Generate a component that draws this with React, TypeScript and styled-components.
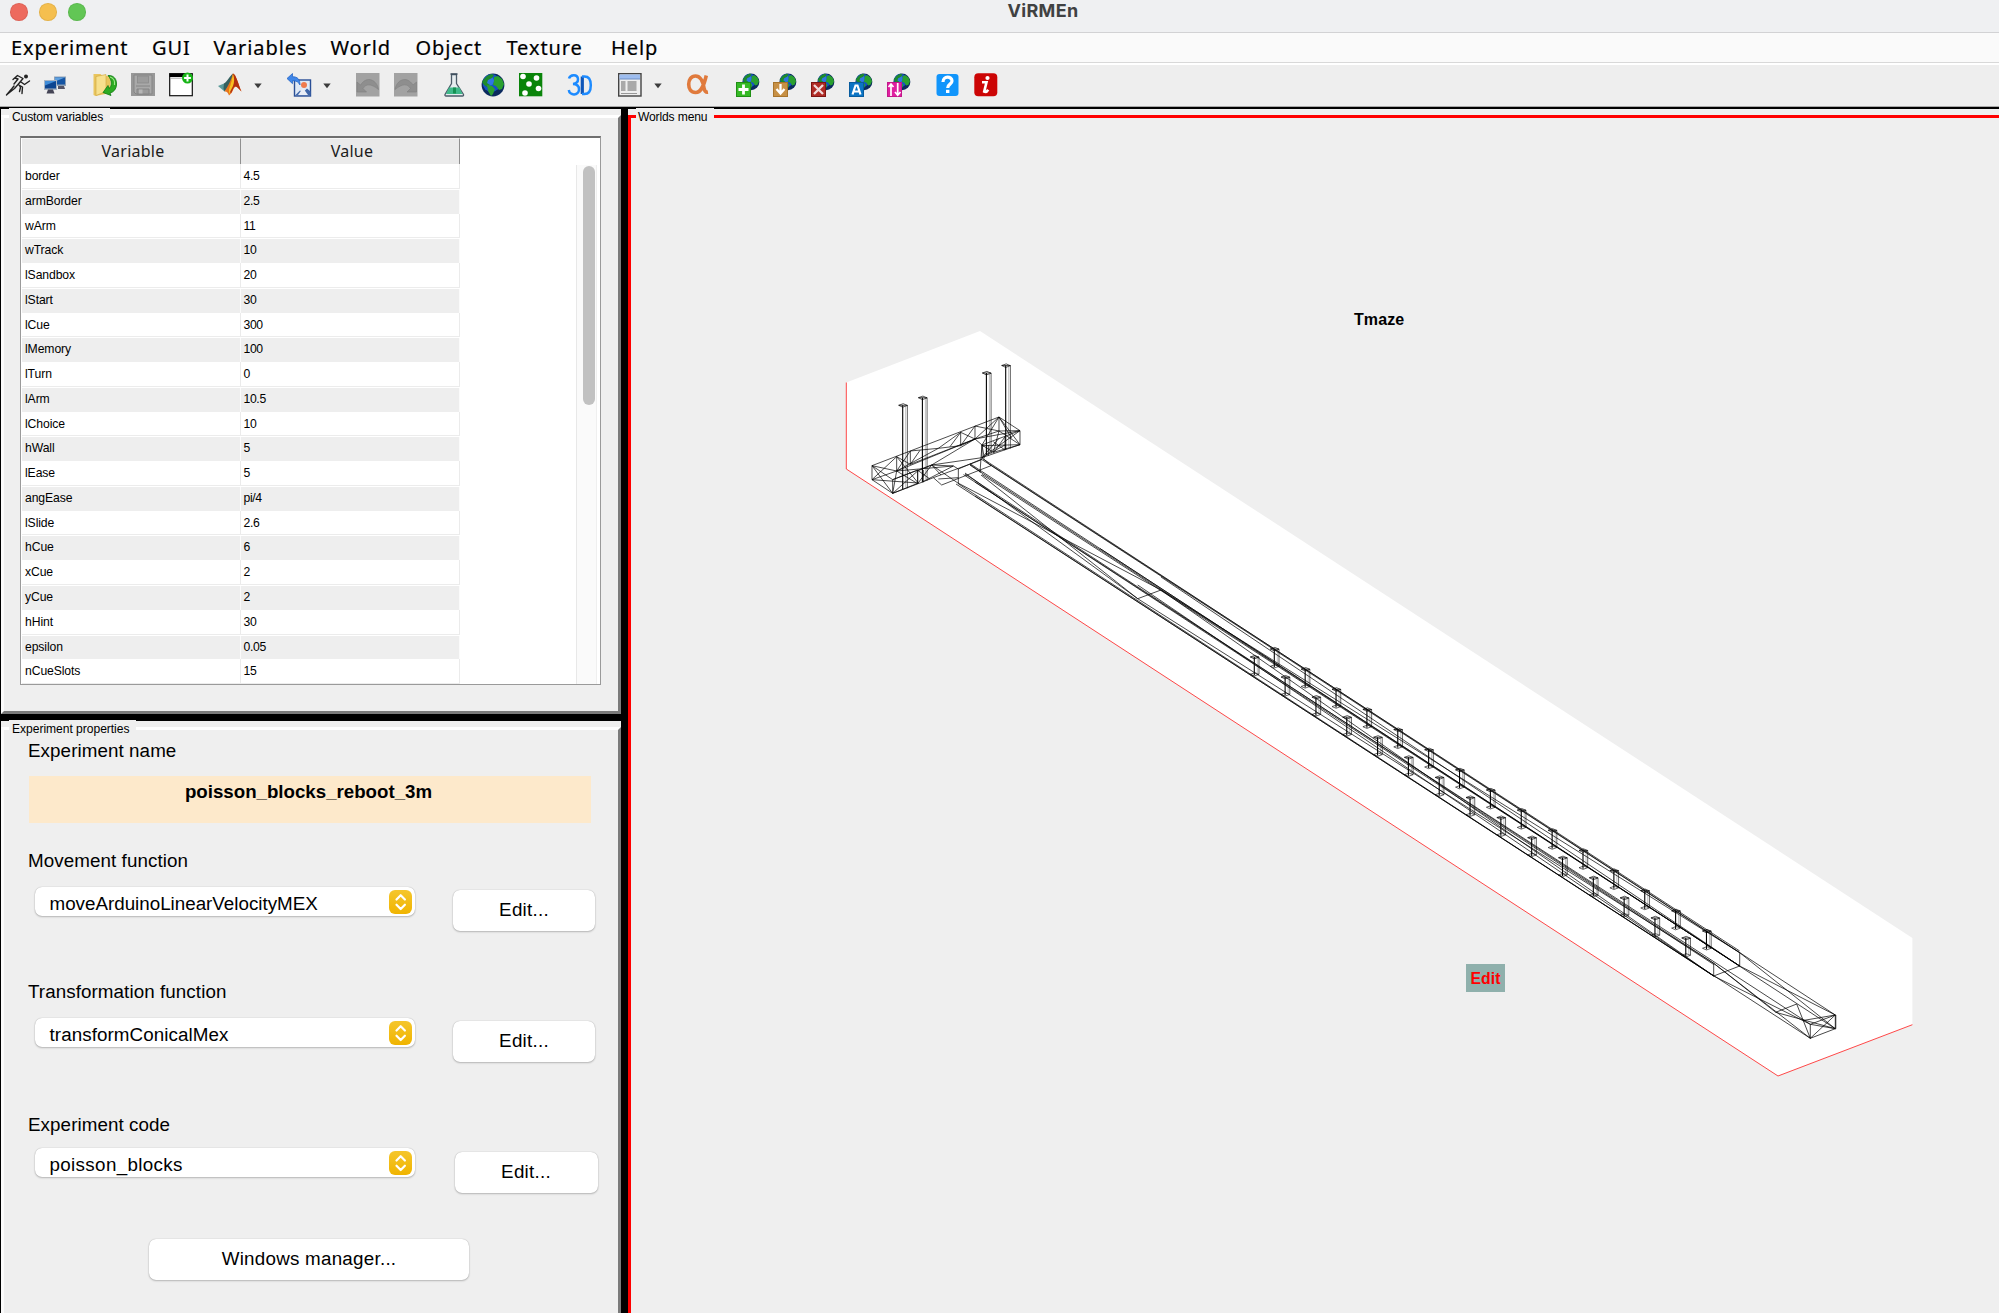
import React from 'react';
import styled, { createGlobalStyle } from 'styled-components';

const SANS = '"Liberation Sans", Arial, sans-serif';
const LUCIDA = '"Noto Sans", "Open Sans", sans-serif';

const GlobalStyle = createGlobalStyle`
  *, *::before, *::after { box-sizing: border-box; }
  body { margin: 0; background: #000; overflow: hidden; }
`;

const Window = styled.div`
  width: 1999px;
  height: 1313px;
  display: flex;
  flex-direction: column;
  overflow: hidden;
  background: #000;
  font-family: ${SANS};
  color: #000;
`;

/* ---------- title bar ---------- */
const TitleBar = styled.header`
  height: 33px;
  flex: none;
  display: grid;
  grid-template-columns: 1fr auto 1fr;
  align-items: start;
  background: #eff0f2;
  border-bottom: 1px solid #d2d2d4;
`;
const Lights = styled.div`
  display: flex;
  gap: 11.5px;
  padding: 3px 0 0 10px;
`;
const Light = styled.span<{ $color: string }>`
  width: 17.7px;
  height: 17.7px;
  border-radius: 50%;
  background: ${p => p.$color};
  box-shadow: inset 0 0 0 1px rgba(0, 0, 0, 0.07);
`;
const WindowTitle = styled.h1`
  margin: 0;
  padding-left: 87px;
  font: 700 18px/22px Inter, sans-serif;
  letter-spacing: 0.35px;
  color: #404142;
`;

/* ---------- menu bar ---------- */
const MenuBar = styled.nav`
  height: 32px;
  flex: none;
  display: flex;
  padding-left: 11px;
  background: linear-gradient(#fafafa 29px, #d8d8d8 29px 30px, #fff 30px);
`;
const MenuItem = styled.span<{ $w: number }>`
  width: ${p => p.$w}px;
  white-space: nowrap;
  font: 400 20px/30px ${LUCIDA};
  letter-spacing: 0.9px;
  -webkit-text-stroke: 0.2px #000;
`;

/* ---------- toolbar ---------- */
const Toolbar = styled.div`
  height: 41.5px;
  flex: none;
  display: flex;
  align-items: center;
  padding: 0 0 1px 5.5px;
  background: #eee;
  border-bottom: 1px solid #a8a8a8;
`;
const Tool = styled.span<{ $gap: number; $w?: number }>`
  width: ${p => p.$w ?? 24}px;
  height: 24px;
  margin-left: ${p => p.$gap}px;
  flex: none;
  svg { display: block; width: 100%; height: 100%; overflow: visible; }
`;

/* ---------- panels ---------- */
const Body = styled.main`
  flex: 1;
  min-height: 0;
  display: grid;
  grid-template-columns: 620px 1fr;
  column-gap: 7px;
  padding-left: 1px;
  border-top: 2px solid #000;
  box-shadow: inset 0 1px 0 #000;
  background: #000;
`;
const LeftColumn = styled.div`
  display: grid;
  grid-template-rows: 605px 1fr;
  row-gap: 7px;
`;
const Panel = styled.section`
  display: flex;
  flex-direction: column;
  padding-top: 6px;
  background: #efefef;
  min-height: 0;
`;
const Group = styled.div<{ $red?: boolean; $open?: boolean }>`
  flex: 1;
  min-height: 0;
  display: flex;
  flex-direction: column;
  border-style: solid;
  border-width: 3px;
  border-color: ${p => (p.$red ? '#f00' : '#fff #7b7b7b #7b7b7b #fbfbfb')};
  ${p => p.$open && 'border-bottom-width: 0;'}
  ${p => p.$red && 'border-right-width: 0;'}
`;
const Legend = styled.h2<{ $pad: number; $track?: number }>`
  margin: -10px 0 0 5px;
  padding: 0 7px 0 ${p => p.$pad}px;
  align-self: flex-start;
  height: 18px;
  background: #efefef;
  font: 400 12.1px/18px ${SANS};
  letter-spacing: ${p => p.$track ?? -0.15}px;
  white-space: nowrap;
`;

/* ---------- variables table ---------- */
const TableBox = styled.div`
  width: 581px;
  height: 549px;
  margin: 10px 0 0 16px;
  display: grid;
  grid-template-columns: 439px 1fr 20px;
  grid-template-rows: 100%;
  border: 1px solid #9a9a9a;
  border-top: 2px solid #6f6f6f;
  background: #fff;
`;
const Table = styled.div`
  display: flex;
  flex-direction: column;
  padding-left: 1px;
  min-height: 0;
`;
const HeadRow = styled.div`
  height: 26.5px;
  flex: none;
  display: grid;
  grid-template-columns: 219px 1fr;
`;
const HeadCell = styled.div`
  background: #eaeaea;
  padding-left: 4px;
  border-right: 1px solid #8f8f8f;
  border-bottom: 1px solid #8f8f8f;
  border-top: 1px solid #f6f6f6;
  text-align: center;
  font: 400 16px/25px ${LUCIDA};
  letter-spacing: 0.25px;
  color: #1c1c1c;
`;
const Rows = styled.div`
  flex: 1;
  min-height: 0;
  overflow: hidden;
  display: grid;
  grid-template-rows: repeat(21, 24.77px);
`;
const Row = styled.div<{ $alt: boolean }>`
  display: grid;
  grid-template-columns: 219px 1fr;
  align-items: stretch;
  min-height: 0;
  background: ${p => (p.$alt ? '#eee' : '#fff')};
  border-top: ${p => (p.$alt ? '1px solid #fff' : '0')};
  border-bottom: ${p => (p.$alt ? '0' : '1px solid #ececec')};
  --rule: ${p => (p.$alt ? '#fbfbfb' : '#ebebeb')};
`;
const Cell = styled.span<{ $numeric?: boolean; $alt: boolean }>`
  padding-left: ${p => (p.$numeric ? 2.5 : 3)}px;
  border-right: 1px solid var(--rule);
  font: 400 12.2px/${p => (p.$alt ? 23 : 24.5)}px ${SANS};
  letter-spacing: ${p => (p.$numeric ? -0.35 : -0.1)}px;
  overflow: hidden;
`;
const ScrollTrack = styled.div`
  grid-column: 3;
  margin: 27px 0 0 -4px;
  width: 21px;
  padding: 1px 0 0 5.5px;
  background: #fafafa;
  border-left: 1px solid #e8e8e8;
  border-right: 1px solid #efefef;
`;
const ScrollThumb = styled.div`
  width: 12px;
  height: 239px;
  border-radius: 6px;
  background: #c1c1c1;
`;

/* ---------- experiment form ---------- */
const Form = styled.div`
  padding-left: 24px;
  display: flex;
  flex-direction: column;
`;
const Label = styled.label<{ $mt: number }>`
  height: 22px;
  margin-top: ${p => p.$mt}px;
  font: 400 18.8px/22px ${SANS};
  letter-spacing: 0.08px;
`;
const NameBox = styled.div`
  width: 562px;
  height: 46.5px;
  margin: 14.5px 0 0 1px;
  padding-top: 4px;
  padding-right: 3px;
  background: #fde9cb;
  text-align: center;
  font: 700 18.7px/23px ${SANS};
`;
const Field = styled.div<{ $mt: number }>`
  display: flex;
  align-items: flex-start;
  margin: ${p => p.$mt}px 0 0 7px;
`;
const Select = styled.div<{ $track: number }>`
  width: 380px;
  height: 29px;
  display: flex;
  justify-content: space-between;
  align-items: flex-start;
  padding: 3px 3px 0 14.5px;
  border-radius: 7px;
  background: #fff;
  box-shadow: 0 0 1px rgba(0, 0, 0, 0.3), 0 1px 2px rgba(0, 0, 0, 0.22);
  font: 400 18.8px/28px ${SANS};
  letter-spacing: ${p => p.$track}px;
`;
const Stepper = styled.span`
  width: 23px;
  height: 24px;
  border-radius: 6px;
  background: linear-gradient(#f5c62c, #f0b400);
  svg { display: block; width: 23px; height: 24px; }
`;
const Button = styled.button<{ $w: number; $ml: number; $mt: number }>`
  width: ${p => p.$w}px;
  height: 41px;
  margin: ${p => p.$mt}px 0 0 ${p => p.$ml}px;
  padding: 0 0 1px;
  border: 0;
  border-radius: 7px;
  background: #fff;
  box-shadow: 0 0 1px rgba(0, 0, 0, 0.3), 0 1px 2px rgba(0, 0, 0, 0.22);
  font: 400 18.8px/22px ${SANS};
  letter-spacing: 0.25px;
  color: #000;
`;

/* ---------- world canvas ---------- */
const Canvas = styled.div`
  position: relative;
  flex: 1;
  min-height: 0;
`;
const Scene = styled.svg`
  position: absolute;
  left: 199px;
  top: 194px;
  display: block;
`;
const WorldName = styled.span`
  position: absolute;
  left: 723px;
  top: 184px;
  font: 700 16px/20px ${SANS};
  letter-spacing: 0.1px;
`;
const EditTag = styled.span`
  position: absolute;
  left: 835px;
  top: 838px;
  width: 39px;
  height: 28px;
  background: #8fb0ac;
  color: #f00;
  text-align: center;
  font: 700 15.8px/30px ${SANS};
`;

const variables: [string, string][] = [
  ['border', '4.5'], ['armBorder', '2.5'], ['wArm', '11'], ['wTrack', '10'],
  ['lSandbox', '20'], ['lStart', '30'], ['lCue', '300'], ['lMemory', '100'],
  ['lTurn', '0'], ['lArm', '10.5'], ['lChoice', '10'], ['hWall', '5'],
  ['lEase', '5'], ['angEase', 'pi/4'], ['lSlide', '2.6'], ['hCue', '6'],
  ['xCue', '2'], ['yCue', '2'], ['hHint', '30'], ['epsilon', '0.05'],
  ['nCueSlots', '15'],
];

const menus: [string, number][] = [
  ['Experiment', 141], ['GUI', 61.5], ['Variables', 117], ['World', 85],
  ['Object', 91], ['Texture', 104.5], ['Help', 60],
];

/* ---------- icons ---------- */
const Svg = ({ children, box = '0 0 24 24' }: { children: React.ReactNode; box?: string }) => (
  <svg viewBox={box}>{children}</svg>
);

const GlobeArt = () => (
  <>
    <circle cx="12" cy="12" r="11.4" fill="#0b2a5e" />
    <circle cx="10.5" cy="10" r="9" fill="#1550c8" />
    <circle cx="8.5" cy="8" r="4.5" fill="#3b86ee" opacity=".7" />
    <path d="M3 6 6 3l4-2 3 1-2 3-4 2-1 3 3 2-3 2-3-2-2-3z" fill="#1d8a2c" />
    <path d="M13 4l4-1 4 3 2 5-2 5-3 1-3-4-3-1 1-4z" fill="#2aa02f" />
    <path d="M6 12l5 1 3 3-2 5-2 2-3-5z" fill="#2b9e33" />
    <path d="M20 5a11.4 11.4 0 0 1-13 17.300a11.400 11.400 0 0 0 13-17.300z" fill="#02101f" opacity=".6" />
  </>
);

const WorldBadge = ({ fill, stroke, children }: { fill: string; stroke: string; children: React.ReactNode }) => (
  <Svg>
    <g transform="translate(6 0) scale(.74)"><GlobeArt /></g>
    <rect x=".5" y="9.500" width="14" height="14" fill={fill} stroke={stroke} />
    {children}
  </Svg>
);

const Caret = ({ gap }: { gap: number }) => (
  <Tool $gap={gap} $w={8}>
    <Svg box="0 0 8 24"><path d="M.3 10.500h7.400L4 15.200z" fill="#3c3c3c" /></Svg>
  </Tool>
);

const Tools = () => (
  <Toolbar>
    <Tool $gap={0}>
      <Svg>
        <g fill="none" stroke="#222" strokeWidth="1.400" strokeLinecap="round" strokeLinejoin="round">
          <path d="M7 6.500 11.500 2.500 17 5.500 12 11.500 16.500 14 16 20.500M15 9l3.500 2.500L23.500 8M12 11.500 8.500 15.500 1 21.500M9 5l3 1-4 5M13.500 12.500l1 2-1 4M8 13l-2 2.500L.5 22" />
        </g>
        <circle cx="20" cy="3.500" r="2" fill="#222" />
      </Svg>
    </Tool>
    <Tool $gap={13.500}>
      <Svg>
        <rect x="11" y="3.500" width="12" height="9.500" fill="#8fa0b4" />
        <rect x="12" y="4.500" width="10" height="7" fill="#1555a4" />
        <path d="M12 4.500h10l-10 4z" fill="#5ea0e0" />
        <path d="M15 13h6l1 3h-7z" fill="#556" />
        <rect x="1" y="7" width="13" height="10" fill="#a7b4c4" />
        <rect x="2" y="8" width="11" height="7.500" fill="#0d4590" />
        <path d="M2 8h11L2 12.500z" fill="#3f8cd8" />
        <path d="M5 16.500h5l1.500 4H3.500z" fill="#445" />
      </Svg>
    </Tool>
    <Tool $gap={25.500}>
      <Svg>
        <path d="M.5 1h7l2 2h8v17l-15 3-2-1z" fill="#e9c55e" />
        <path d="M3 3.500l10-2v17L3 22.500z" fill="#f7e08d" stroke="#cfa53c" strokeWidth=".6" />
        <path d="M15 2.500c6-.5 9 4 8.500 9.500-.4 4-2.500 7-6.500 8l1 2.500-8-3 5-7 1 3c3-2 3.500-8-1-13z" fill="#2cab22" stroke="#0e7a12" strokeWidth=".8" />
        <path d="M17 4c4 1 5 5 4.500 8" stroke="#9fe68c" strokeWidth="1.200" fill="none" />
      </Svg>
    </Tool>
    <Tool $gap={14}>
      <Svg>
        <rect width="24" height="23" fill="#989898" />
        <path d="M3 2h18v19H5l-2-2z" fill="#a9a9a9" stroke="#858585" />
        <rect x="6.500" y="3" width="11" height="7" fill="#9c9c9c" stroke="#888" strokeWidth=".7" />
        <path d="M5 13h14M6 16h12v5H6z" fill="#9a9a9a" stroke="#848484" />
        <rect x="8" y="16.500" width="3.500" height="4" fill="#b6b6b6" />
      </Svg>
    </Tool>
    <Tool $gap={14}>
      <Svg>
        <rect x=".7" y=".7" width="22.600" height="22" fill="#fff" stroke="#111" strokeWidth="1.200" />
        <rect x=".5" y=".5" width="16" height="3.500" fill="#000" />
        <path d="M1 5.200h12" stroke="#aaa" />
        <circle cx="18.500" cy="5" r="5.500" fill="#17b417" />
        <path d="M18.500 1.600v6.800M15.100 5h6.800" stroke="#fff" strokeWidth="2" />
      </Svg>
    </Tool>
    <Tool $gap={25.500}>
      <Svg>
        <path d="M0 13 6 10.500 10 12l-3.500 6.500z" fill="#5c9b9a" />
        <path d="M6 10.500C9 9 11 4 15 .5l-1 9-7.500 9-1-3z" fill="#34605f" />
        <path d="M15 .5c-2 7-5 13-8.500 18 2-.5 3.500 1 4.500 4 4-3 4-7 6-8.500 2.500-1 3 1.500 6.500 4.500C20.500 12 18 1 15 .5z" fill="#e8731c" />
        <path d="M15 .5c-.5 6-2 12-4 16l2 4c2-4 2-6 4-7 2 0 3 1.500 6.500 5C20.500 12 18 1 15 .5z" fill="#b23012" />
        <path d="M15 1c1.500 4 1.500 8 0 12l-4 8 0-5c2-5 3-10 4-15z" fill="#f9c021" />
      </Svg>
    </Tool>
    <Caret gap={12} />
    <Tool $gap={25}>
      <Svg>
        <rect x="7.500" y="7" width="16" height="16" fill="#dfe9f6" stroke="#2a4f96" strokeWidth="1.400" />
        <path d="M8 22.500l5-5 3 2 4-4 3.500 3v4z" fill="#3f66a9" />
        <path d="M11 22l5-7 5 7z" fill="#e9edf6" />
        <circle cx="17" cy="12" r="3" fill="#ef7b4e" />
        <path d="M0 5.500 5.500.5v3.200c5 0 7.500 2.500 7.500 8.300-1.500-3-3.500-4.300-7.500-4.300v3z" fill="#3f86e8" stroke="#1b5bc0" strokeWidth=".7" />
      </Svg>
    </Tool>
    <Caret gap={12} />
    <Tool $gap={24.500}>
      <Svg>
        <rect width="23.500" height="23.500" fill="#a2a2a2" />
        <path d="M1 9v10h9.500l-3.500-3.500c3-5 8-5 15.500 1C21 7 11 2 4.500 12z" fill="#8e8e8e" stroke="#7f7f7f" strokeWidth=".6" />
      </Svg>
    </Tool>
    <Tool $gap={14}>
      <Svg>
        <rect width="23.500" height="23.500" fill="#a2a2a2" />
        <path d="M22.500 9v10H13l3.500-3.500c-3-5-8-5-15.500 1C2.500 7 12.500 2 19 12z" fill="#8e8e8e" stroke="#7f7f7f" strokeWidth=".6" />
      </Svg>
    </Tool>
    <Tool $gap={24.500}>
      <Svg>
        <path d="M9.500 1.500v9L3 21.500c-.3 1 .2 1.500 1 1.500h16.500c.8 0 1.300-.5 1-1.500L14.500 10.500v-9z" fill="#e6ecef" stroke="#4b5b68" strokeWidth="1.300" />
        <path d="M7 14.500h10.500l3 6.500H4z" fill="#3fb98a" />
        <path d="M11 14.500h3v6h-3z" fill="#159152" />
        <path d="M8.500 1h7" stroke="#3c4c5c" strokeWidth="1.500" />
      </Svg>
    </Tool>
    <Tool $gap={14.500}><Svg><GlobeArt /></Svg></Tool>
    <Tool $gap={14}>
      <Svg>
        <rect width="23.300" height="23.300" fill="#0a840a" />
        {[[4, 3.500], [17.500, 5], [10, 11], [19.500, 15.500], [6, 20]].map(([x, y]) => (
          <circle key={x} cx={x} cy={y} r="2.800" fill="#fff" />
        ))}
      </Svg>
    </Tool>
    <Tool $gap={25}>
      <Svg>
        <g fill="none" strokeWidth="2.500" stroke="#1d8bff">
          <path d="M1 5.500C2 1.500 9.500.5 10 6c.2 3-2 4.800-5 5 4 .2 6 2 6 5.300C11 23 1.500 23 .8 17" />
          <path d="M14.300 3.500v17.500" stroke="#0f56b8" strokeWidth="3.200" />
          <path d="M14 3.500h2.500c4 0 6.300 3.200 6.300 8.700s-2.300 8.800-6.300 8.800H14" />
        </g>
      </Svg>
    </Tool>
    <Tool $gap={26}>
      <Svg>
        <rect x=".7" y=".7" width="22.300" height="22.300" fill="#efefef" stroke="#444" strokeWidth="1.400" />
        <rect x="1.500" y="1.500" width="20.500" height="4.500" fill="#9dbdf0" />
        <path d="M1.500 6h20.500" stroke="#6f8fc5" />
        <rect x="3" y="8" width="4.500" height="10" fill="#a9a9a9" />
        <rect x="9.500" y="8" width="9" height="10" fill="#a9a9a9" />
        <path d="M3 20.500h16" stroke="#999" />
      </Svg>
    </Tool>
    <Caret gap={12} />
    <Tool $gap={24.500}>
      <Svg>
        <path d="M20.300 2.500C18 12 15.500 19.500 9.500 19.500c-4.500 0-6.800-3.500-6.800-8.200S5.200 3 9.500 3c5.500 0 7.500 6 8.500 12 .5 3 1.500 4.500 4 4.200" fill="none" stroke="#e07a3c" strokeWidth="3.600" />
      </Svg>
    </Tool>
    <Tool $gap={25.500}>
      <WorldBadge fill="#35b925" stroke="#1f8f14"><path d="M7.500 11.500v10M2.500 16.500h10" stroke="#fff" strokeWidth="2.800" /></WorldBadge>
    </Tool>
    <Tool $gap={13.800}>
      <WorldBadge fill="#c79045" stroke="#a8742c"><path d="M7.500 11v9M3.500 16l4 4.500 4-4.500" stroke="#fff" strokeWidth="2.300" fill="none" /></WorldBadge>
    </Tool>
    <Tool $gap={13.800}>
      <WorldBadge fill="#b02c26" stroke="#7d1512"><path d="M3 12l9 9M12 12l-9 9" stroke="#f1dcdc" strokeWidth="2.300" /></WorldBadge>
    </Tool>
    <Tool $gap={13.800}>
      <WorldBadge fill="#0b74c4" stroke="#085c9e"><path d="M3.500 21.500 6.500 12.500h2l3 9M5 18.500h5" stroke="#fff" strokeWidth="2.200" fill="none" /></WorldBadge>
    </Tool>
    <Tool $gap={13.800}>
      <WorldBadge fill="#e01fa0" stroke="#c2188a"><path d="M4 23V11.500M1.500 14 4 11l2.500 3M10.700 10v11.500M8 19l2.700 3.200 2.800-3.200" stroke="#fff" strokeWidth="1.700" fill="none" /></WorldBadge>
    </Tool>
    <Tool $gap={25.500}>
      <Svg>
        <rect x=".5" y="1" width="22" height="22" rx="3" fill="#1195fb" />
        <path d="M7 9c0-6.500 9-6 9-1 0 3.300-4.300 3-4.300 7" fill="none" stroke="#fff" strokeWidth="3.200" />
        <rect x="10" y="16.800" width="3.400" height="3.200" fill="#fff" />
      </Svg>
    </Tool>
    <Tool $gap={14}>
      <Svg>
        <rect x=".3" y=".3" width="23" height="23" rx="4" fill="#cc0505" />
        <circle cx="13.500" cy="5" r="2.100" fill="#fff" />
        <path d="M8 9.300h4.500l-2.300 9.400c1.500.8 3-.4 4-2" fill="none" stroke="#fff" strokeWidth="2.600" />
      </Svg>
    </Tool>
  </Toolbar>
);

/* ---------- maze wireframe ---------- */
type Seg = [number, number, number, number];
const toPath = (segs: Seg[]) => segs.map(([a, b, c, d]) => `M${a} ${b}L${c} ${d}`).join('');

/* Crossbar of the T, on a grid three times finer than the screen. */
const armSegs: Seg[] = [
  [36, 212, 417, 66], [417, 66, 480, 107], [480, 107, 480, 149], [480, 149, 366, 188],
  [36, 212, 36, 254], [36, 254, 98, 295], [98, 295, 185, 262], [36, 212, 98, 295],
  [36, 212, 98, 254], [98, 254, 98, 295], [36, 254, 110, 185], [36, 212, 110, 228],
  [36, 254, 110, 228], [110, 185, 110, 228], [151, 168, 151, 208], [302, 112, 302, 152],
  [345, 93, 345, 132], [417, 66, 417, 108], [98, 254, 173, 225], [98, 295, 110, 228],
  [110, 185, 173, 262], [36, 254, 173, 264], [98, 295, 173, 228], [110, 228, 173, 266],
  [110, 228, 151, 168], [110, 185, 151, 208], [110, 228, 235, 160], [151, 208, 345, 132],
  [151, 168, 235, 160], [235, 160, 302, 112], [235, 160, 302, 152], [302, 152, 345, 132],
  [302, 112, 345, 132], [302, 152, 345, 93], [302, 112, 270, 155], [180, 166, 151, 208],
  [110, 228, 280, 213], [110, 228, 345, 132], [98, 254, 215, 210], [215, 210, 345, 132],
  [215, 210, 366, 188], [173, 226, 173, 266], [173, 228, 215, 210], [173, 266, 215, 210],
  [185, 262, 220, 248], [173, 226, 210, 252], [190, 225, 190, 262], [215, 210, 243, 240],
  [215, 210, 295, 265], [215, 210, 280, 213], [280, 213, 295, 222], [295, 222, 295, 265],
  [280, 213, 185, 262], [220, 248, 245, 270], [245, 270, 393, 212], [220, 248, 363, 195],
  [235, 252, 295, 248], [295, 222, 366, 192], [330, 208, 363, 232], [366, 188, 393, 212],
  [366, 150, 360, 232], [366, 150, 373, 190], [345, 132, 372, 155], [366, 150, 400, 172],
  [366, 188, 417, 130], [366, 188, 480, 107], [345, 93, 417, 108], [345, 132, 417, 108],
  [345, 132, 417, 66], [417, 66, 366, 150], [417, 66, 480, 149], [417, 108, 480, 149],
  [417, 108, 480, 107], [366, 152, 480, 149], [366, 150, 480, 107], [345, 132, 480, 107],
  [417, 108, 400, 172], [435, 125, 435, 165], [400, 175, 435, 125], [400, 140, 435, 165],
  [385, 150, 385, 182], [366, 188, 435, 150], [417, 66, 455, 130], [400, 172, 480, 149],
  [98, 295, 173, 265], [173, 226, 173, 266], [366, 150, 366, 188],
];

const corridor: Seg[] = [
  [981, 459, 1739.7, 952.7], [982.5, 458.5, 1835.3, 1015], [970, 465.2, 1739.7, 966],
  [970, 463.7, 1835.3, 1028.700], [965, 474, 1713.7, 963.3], [963.5, 474.6, 1810.3, 1024.3],
  [958, 483.5, 1713.7, 976], [956, 484, 1810.3, 1038.3],
  [990, 464.500, 1739.7, 951], [982, 474.500, 1739.7, 966], [975, 482, 1713.7, 964.500], [975, 496, 1713.7, 976],
  [981, 475, 1137.7, 598.7], [958, 483, 1161, 590], [965, 473, 1137.7, 598.7],
  [1137.7, 598.7, 1161, 590], [1100, 548.500, 1739.7, 966], [1161, 577, 1739.7, 966],
  [1161, 590, 1739.7, 952.7], [1137.7, 585, 1713.7, 976], [1137.7, 598.7, 1713.7, 963.3],
  [1161, 590, 1713.7, 976],
  [1739.7, 952.7, 1739.7, 966], [1713.7, 963.3, 1713.7, 976], [1713.7, 976, 1739.7, 966],
  [1739.7, 952.7, 1835.3, 1028.7], [1739.7, 966, 1835.3, 1015], [1713.7, 963.3, 1810.3, 1038.3],
  [1713.7, 976, 1810.3, 1024.3], [1775.7, 1012.3, 1796.7, 1004], [1796.7, 1004, 1810.3, 1038.3],
  [1775.7, 1012.3, 1835.3, 1028.7], [1713.7, 963.3, 1775.7, 1012.3],
  [1810.3, 1038.3, 1835.3, 1028.7], [1835.3, 1028.7, 1835.3, 1015], [1835.8, 1028.7, 1835.8, 1015],
  [1835.3, 1015, 1810.3, 1024.3], [1810.3, 1024.3, 1810.3, 1038.3], [1810.3, 1024.3, 1835.3, 1028.7],
  [1810.3, 1038.3, 1835.3, 1015], [1803, 1020.500, 1835.3, 1015],
];

/* Towers lining both sides of the cue region. */
const cueSlots = 15;
const towers = Array.from({ length: cueSlots }, (_, i) => [
  { x: 1274.3 + i * 30.87, y: 649 + i * 20.140 },
  { x: 1254.3 + i * 30.82, y: 657 + i * 20.070 },
]).flat();

const Tower = ({ x, y, h, w = 4.700 }: { x: number; y: number; h: number; w?: number }) => (
  <g transform={`translate(${x} ${y})`}>
    <path d="M-4 0 .5-1.600 4.700.2 0 1.900zM-4 0H4.700" strokeWidth=".65" />
    <path d={`M0 0V${h}`} strokeWidth="1.100" />
    <path d={`M${w} 0V${h - 1}`} strokeWidth=".6" />
    <path d={`M3 1V${h - 2}`} strokeWidth=".25" />
    {h < 30 && <path d={`M-4 ${h - 1} .5 ${h - 2.600} 4.700 ${h - 1} 0 ${h + 0.700}z`} strokeWidth=".6" />}
  </g>
);

const Maze = () => (
  <Scene width="1090" height="770" viewBox="830 320 1090 770">
    <path d="M980 331 1912.400 938V1024.700L1778 1076 846.300 469V382.500z" fill="#fff" />
    <path d="M846.300 382.500V469L1778 1076l134.400-51.300" fill="none" stroke="#f33" strokeWidth=".9" />
    <g fill="none" stroke="#000">
      <path d={toPath(corridor)} strokeWidth=".72" />
      <path d={toPath(armSegs)} strokeWidth="2.100" transform="translate(860 395) scale(.33333)" />
      {towers.map(t => <Tower key={t.x} {...t} h={18.300} />)}
      <Tower x={902.700} y={405.300} h={84} />
      <Tower x={922.400} y={397.700} h={84} />
      <Tower x={986.400} y={373} h={82} />
      <Tower x={1005.700} y={365.500} h={84} />
    </g>
  </Scene>
);

const Chevrons = () => (
  <Stepper>
    <svg viewBox="0 0 23 24">
      <path d="M7.500 9.500 11.700 5.200l4.200 4.300M7.500 14.700l4.200 4.300 4.200-4.300" fill="none" stroke="#fff" strokeWidth="2.200" strokeLinecap="round" strokeLinejoin="round" />
    </svg>
  </Stepper>
);

interface PickerProps { label: string; value: string; labelTop: number; top: number; buttonTop: number; track?: number; wide?: boolean }
const FunctionPicker = ({ label, value, labelTop, top, buttonTop, track = 0, wide }: PickerProps) => (
  <>
    <Label $mt={labelTop}>{label}</Label>
    <Field $mt={top}>
      <Select $track={track}>{value}<Chevrons /></Select>
      <Button $w={wide ? 143 : 142} $ml={wide ? 39.500 : 38} $mt={buttonTop}>Edit...</Button>
    </Field>
  </>
);

export default function App() {
  return (
    <Window>
      <GlobalStyle />
      <TitleBar>
        <Lights>
          <Light $color="#ed6a5e" />
          <Light $color="#f5bf4f" />
          <Light $color="#62c655" />
        </Lights>
        <WindowTitle>ViRMEn</WindowTitle>
      </TitleBar>
      <MenuBar>
        {menus.map(([name, w]) => <MenuItem key={name} $w={w}>{name}</MenuItem>)}
      </MenuBar>
      <Tools />
      <Body>
        <LeftColumn>
          <Panel>
            <Group>
              <Legend $pad={3}>Custom variables</Legend>
              <TableBox>
                <Table>
                  <HeadRow><HeadCell>Variable</HeadCell><HeadCell>Value</HeadCell></HeadRow>
                  <Rows>
                    {variables.map(([name, value], i) => {
                      const alt = i % 2 === 1;
                      return (
                        <Row key={name} $alt={alt}>
                          <Cell $alt={alt}>{name}</Cell>
                          <Cell $alt={alt} $numeric>{value}</Cell>
                        </Row>
                      );
                    })}
                  </Rows>
                </Table>
                <ScrollTrack><ScrollThumb /></ScrollTrack>
              </TableBox>
            </Group>
          </Panel>
          <Panel>
            <Group $open>
              <Legend $pad={3} $track={-0.04}>Experiment properties</Legend>
              <Form>
                <Label $mt={2}>Experiment name</Label>
                <NameBox>poisson_blocks_reboot_3m</NameBox>
                <FunctionPicker label="Movement function" value="moveArduinoLinearVelocityMEX" labelTop={27} top={15.500} buttonTop={3} />
                <FunctionPicker label="Transformation function" value="transformConicalMex" labelTop={49.500} top={15.500} buttonTop={3} track={0.080} />
                <FunctionPicker label="Experiment code" value="poisson_blocks" labelTop={51.500} top={12.500} buttonTop={4} track={0.350} wide />
                <Button $w={320} $ml={121} $mt={45.500}>Windows manager...</Button>
              </Form>
            </Group>
          </Panel>
        </LeftColumn>
        <Panel>
          <Group $red $open>
            <Legend $pad={2}>Worlds menu</Legend>
            <Canvas>
              <Maze />
              <WorldName>Tmaze</WorldName>
              <EditTag>Edit</EditTag>
            </Canvas>
          </Group>
        </Panel>
      </Body>
    </Window>
  );
}
